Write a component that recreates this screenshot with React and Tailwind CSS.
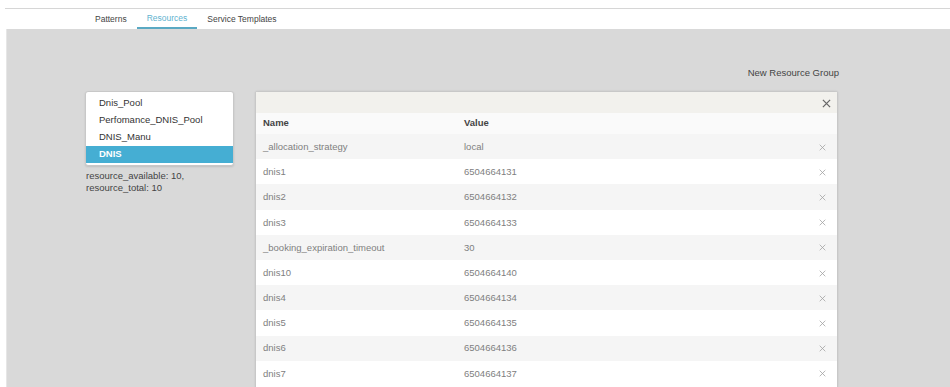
import React from "react";

const rows = [
  ["_allocation_strategy", "local"],
  ["dnis1", "6504664131"],
  ["dnis2", "6504664132"],
  ["dnis3", "6504664133"],
  ["_booking_expiration_timeout", "30"],
  ["dnis10", "6504664140"],
  ["dnis4", "6504664134"],
  ["dnis5", "6504664135"],
  ["dnis6", "6504664136"],
  ["dnis7", "6504664137"],
];

function X({ size = 7, color = "#9a9a9a", w = 1 }) {
  return (
    <svg width={size} height={size} viewBox="0 0 10 10">
      <path d="M1 1L9 9M9 1L1 9" stroke={color} strokeWidth={w} />
    </svg>
  );
}

export default function App() {
  return (
    <div
      className="w-[950px] h-[387px] overflow-hidden bg-white flex flex-col"
      style={{ fontFamily: '"Liberation Sans", Arial, sans-serif' }}
    >
      <div className="h-[8px] shrink-0" />
      <div className="pl-[5px] shrink-0">
        <div className="border-t border-[#d6d6d6] h-[21px] bg-white flex pl-[80px] text-[8.5px] text-[#444]">
          <div className="px-[10px] flex items-center h-full">Patterns</div>
          <div className="px-[10px] flex items-center h-full text-[#5fb3cf] border-b-2 border-[#5aa9c3]">
            Resources
          </div>
          <div className="px-[10px] flex items-center h-full">Service Templates</div>
        </div>
      </div>
      <div className="flex-1 flex pl-[6px]">
        <div className="flex-1 bg-[#d9d9d9] border-l border-[#e6e6e6] flex flex-col">
          <div className="h-[35px] shrink-0" />
          <div className="flex justify-end pr-[111px] text-[9.5px] text-[#444] h-[18px] items-center">
            New Resource Group
          </div>
          <div className="h-[9px] shrink-0" />
          <div className="flex pl-[78px] flex-1">
            <div className="w-[149px] shrink-0">
              <div className="bg-white border border-[#c8c8c8] rounded-[3px] shadow-[0_1px_2px_rgba(0,0,0,0.12)] pt-[3px] pb-[2px] text-[9.5px] text-[#333]">
                <div className="h-[17px] flex items-center pl-[13px]">Dnis_Pool</div>
                <div className="h-[17px] flex items-center pl-[13px]">Perfomance_DNIS_Pool</div>
                <div className="h-[17px] flex items-center pl-[13px]">DNIS_Manu</div>
                <div className="h-[17px] flex items-center pl-[13px] bg-[#45aed3] text-white font-bold">
                  DNIS
                </div>
              </div>
              <div className="mt-[4px] text-[9.5px] leading-[12px] text-[#444] pl-[1px]">
                <div>resource_available: 10,</div>
                <div>resource_total: 10</div>
              </div>
            </div>
            <div className="w-[21px] shrink-0" />
            <div className="w-[583px] shrink-0 bg-white border border-[#c8c8c8] border-b-0 rounded-t-[3px] shadow-[0_0_2px_rgba(0,0,0,0.12)] flex flex-col">
              <div className="h-[21px] bg-[#f2f1ed] flex items-center justify-end pr-[6px] pt-[1px]">
                <X size={9} color="#666" w={1.4} />
              </div>
              <div className="h-[21px] bg-[#fafafa] flex items-center text-[9.5px] font-bold text-[#444]">
                <div className="w-[208px] pl-[7px]">Name</div>
                <div>Value</div>
              </div>
              {rows.map(([n, v], i) => (
                <div
                  key={n}
                  className={
                    "h-[25.2px] shrink-0 flex items-center pt-[1px] text-[9.5px] text-[#808080] " +
                    (i % 2 === 0 ? "bg-[#f5f5f5]" : "bg-white")
                  }
                >
                  <div className="w-[208px] pl-[7px]">{n}</div>
                  <div className="flex-1">{v}</div>
                  <div className="pr-[11px] flex items-center">
                    <X size={7} color="#a0a0a0" w={1.1} />
                  </div>
                </div>
              ))}
            </div>
          </div>
        </div>
      </div>
    </div>
  );
}
